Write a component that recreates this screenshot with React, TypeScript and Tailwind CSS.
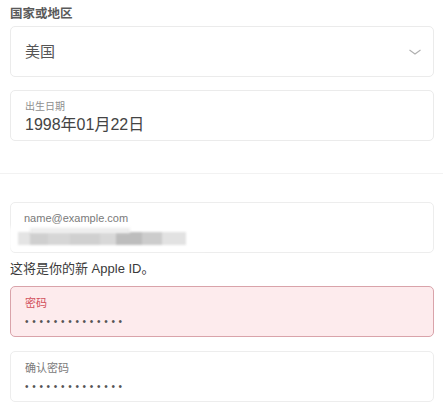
import React from "react";

const font = { fontFamily: '"Liberation Sans", "Noto Sans CJK SC", sans-serif' };

function Dots() {
  return (
    <div className="h-[14px] text-[10px] leading-[14px] tracking-[3.7px] text-[#555]">
      ••••••••••••••
    </div>
  );
}

export default function App() {
  return (
    <div
      className="relative w-[443px] h-[412px] overflow-hidden bg-white"
      style={font}
    >
      <div className="flex flex-col px-[10px] pt-[6px] pr-[9px]">
        <div className="h-[16px] text-[12.5px] leading-[16px] font-bold text-[#5a5a5a]">
          国家或地区
        </div>

        <div className="mt-[4px] flex h-[51px] items-center justify-between rounded-[5px] border border-[#ebebeb] pl-[14px] pr-[11px]">
          <span className="text-[15px] leading-[20px] text-[#555]">美国</span>
          <svg width="14" height="8" viewBox="0 0 14 8" fill="none">
            <path d="M1.5 2 L7 6 L12.5 2" stroke="#b0b0b0" strokeWidth="1.1" />
          </svg>
        </div>

        <div className="mt-[13px] flex h-[51px] flex-col rounded-[5px] border border-[#ebebeb] pl-[14px] pt-[10px]">
          <div className="h-[12px] text-[10px] leading-[12px] text-[#8f8f8f]">出生日期</div>
          <div className="mt-[2px] h-[20px] text-[16px] leading-[20px] text-[#444]">
            1998年01月22日
          </div>
        </div>
      </div>

      <div className="mt-[32px] h-px w-full bg-[#f2f2f2]" />

      <div className="flex flex-col px-[10px] pr-[9px]">
        <div className="relative mt-[28px] flex h-[51px] flex-col rounded-[5px] border border-[#ededed] pl-[13px] pt-[8px]">
          <div className="h-[14px] text-[11px] leading-[14px] text-[#7a7a7a]">name@example.com</div>
        </div>

        <div className="mt-[7px] h-[18px] text-[13px] leading-[18px] text-[#3a3a3a]">
          这将是你的新 Apple ID。
        </div>

        <div className="mt-[8px] flex h-[51px] flex-col rounded-[5px] border border-[#d9a3aa] bg-[#fdebed] pl-[14px] pt-[9px]">
          <div className="h-[14px] text-[11px] leading-[14px] text-[#d2505c]">密码</div>
          <div className="mt-[5px]">
            <Dots />
          </div>
        </div>

        <div className="mt-[14px] flex h-[51px] flex-col rounded-[5px] border border-[#ededed] pl-[14px] pt-[9px]">
          <div className="h-[14px] text-[11px] leading-[14px] text-[#7a7a7a]">确认密码</div>
          <div className="mt-[5px]">
            <Dots />
          </div>
        </div>
      </div>

      {/* blurred (redacted) email value */}
      <div className="absolute left-[0px] top-[227px] h-[23px] w-[205px] bg-white/80 blur-[2px]" />
      <div className="absolute left-[18px] top-[232px] flex h-[13px] w-[168px] blur-[1.2px]">
        <div className="h-full w-[12px] bg-[#e4e4e4]" />
        <div className="h-full w-[18px] bg-[#cfcfcf]" />
        <div className="h-full w-[22px] bg-[#d6d6d6]" />
        <div className="h-full w-[30px] bg-[#d0d0d0]" />
        <div className="h-full w-[16px] bg-[#d8d8d8]" />
        <div className="h-full w-[26px] bg-[#bdbdbd]" />
        <div className="h-full w-[20px] bg-[#cccccc]" />
        <div className="h-full w-[24px] bg-[#e2e2e2]" />
      </div>
      <div className="absolute left-[30px] top-[228px] h-[5px] w-[100px] bg-[#ececec] blur-[1.5px]" />
    </div>
  );
}
